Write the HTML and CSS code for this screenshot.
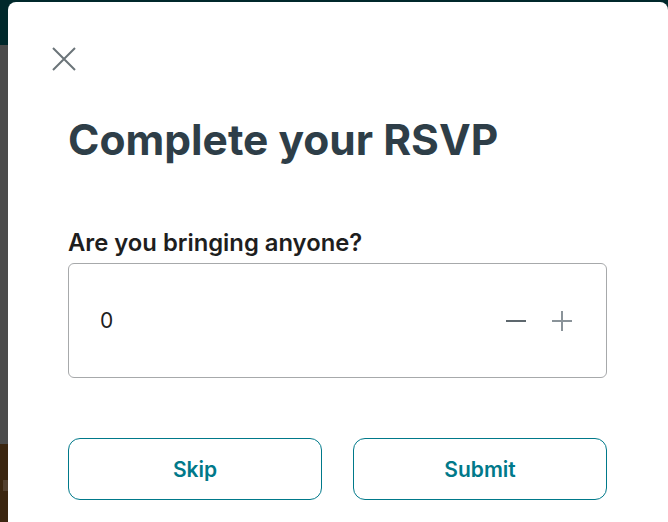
FILE: index.html
```html
<!DOCTYPE html>
<html>
<head>
<meta charset="utf-8">
<link rel="stylesheet" href="styles.css">
</head>
<body>
<div class="page">
  <div class="bg-top"></div>
  <div class="bg-mid"></div>
  <div class="bg-bottom"><span class="bg-chip"></span></div>
</div>
<div class="modal" role="dialog">
  <button class="close" aria-label="Close">
    <svg width="24" height="24" viewBox="0 0 24 24"><path d="M1 1L23 23M23 1L1 23" stroke="#6b7479" stroke-width="2" fill="none"/></svg>
  </button>
  <h1 class="title">Complete your RSVP</h1>
  <label class="label">Are you bringing anyone?</label>
  <div class="stepper">
    <span class="value">0</span>
    <div class="controls">
      <button class="ctrl" aria-label="Decrease">
        <svg width="20" height="20" viewBox="0 0 20 20"><path d="M0 10H20" stroke="#5d676d" stroke-width="2"/></svg>
      </button>
      <button class="ctrl" aria-label="Increase">
        <svg width="20" height="20" viewBox="0 0 20 20"><path d="M0 10H20M10 0V20" stroke="#8a9399" stroke-width="2"/></svg>
      </button>
    </div>
  </div>
  <div class="actions">
    <button class="btn">Skip</button>
    <button class="btn">Submit</button>
  </div>
</div>
</body>
</html>
```
FILE: styles.css
```css
* { box-sizing: border-box; }
html, body { margin: 0; padding: 0; height: 100%; overflow: hidden; }
body { font-family: Inter, "Noto Sans", sans-serif; }
.page { display: flex; flex-direction: column; height: 522px; }
.bg-top { height: 45px; background: #00282b; }
.bg-mid { height: 399px; background: #4b4b4b; }
.bg-bottom { flex: 1; background: #3b2610; position: relative; }
.bg-chip { position: absolute; left: 3px; top: 36px; width: 6px; height: 11px; background: #52402f; }
.modal {
  position: absolute; left: 8px; top: 2px; width: 660px; height: 520px;
  background: #fff; border-radius: 8px 8px 0 0;
  padding: 45px 61px 0 60px;
  display: flex; flex-direction: column;
}
.close { border: 0; background: none; padding: 0; width: 24px; height: 24px; margin-left: -16px; cursor: pointer; }
.close svg { display: block; }
.title { margin: 43px 0 0 0; font-size: 42.5px; font-weight: 700; color: #2e3e48; line-height: 52px; letter-spacing: 0; }
.label { margin-top: 62px; font-size: 23.8px; font-weight: 600; color: #1e1e1e; line-height: 30px; }
.stepper {
  margin-top: 5px; flex: 0 0 115px; height: 115px; border: 1px solid #a7a9ab; border-radius: 6px;
  display: flex; align-items: center; justify-content: space-between;
  padding: 0 34px 0 31px;
}
.value { font-size: 21px; color: #1e1e1e; }
.controls { display: flex; gap: 26px; align-items: center; }
.ctrl { border: 0; background: none; padding: 0; width: 20px; height: 20px; }
.ctrl svg { display: block; }
.actions { margin-top: 60px; display: grid; grid-template-columns: 1fr 1fr; gap: 31px; }
.btn {
  height: 62px; border: 1px solid #00798a; border-radius: 12px; background: #fff;
  color: #00798a; font-family: Inter, "Noto Sans", sans-serif; font-size: 21px; font-weight: 600;
}
```
